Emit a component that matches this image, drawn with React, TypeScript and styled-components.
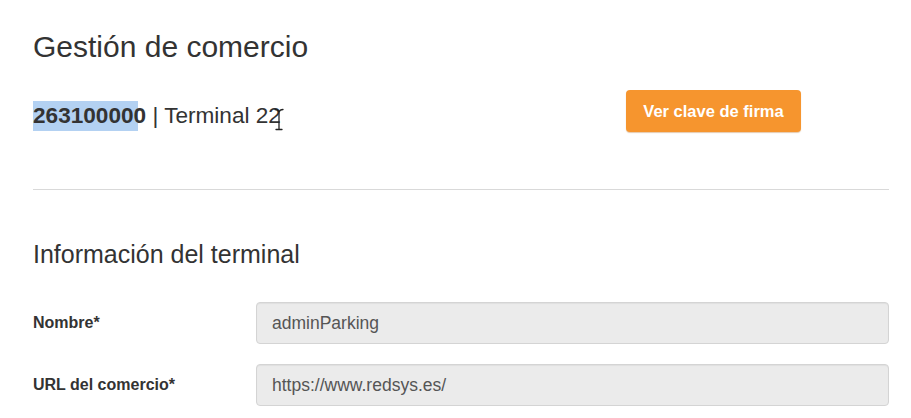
import React from "react";
import styled, { createGlobalStyle } from "styled-components";

const Global = createGlobalStyle`
  html, body { margin: 0; padding: 0; background: #ffffff; }
  body { font-family: "Liberation Sans", Arial, sans-serif; color: #333333; }
`;

const Page = styled.div`
  padding: 29px 22px 0 33px;
  width: 911px;
  box-sizing: border-box;
`;

const Title = styled.h1`
  margin: 0;
  font-size: 30px;
  line-height: 36px;
  font-weight: 400;
  color: #333;
`;

const HeaderRow = styled.div`
  margin-top: 25px;
  display: grid;
  grid-template-columns: 593px auto;
  align-items: start;
`;

const MerchantLine = styled.div`
  margin-top: 13px;
  font-size: 22.6px;
  line-height: 26px;
  color: #333;
  white-space: nowrap;
`;

const Code = styled.strong`
  font-weight: 700;
`;

const Selected = styled.span`
  background: #b3d1f2;
  padding: 2px 4px 3px 0;
  margin-right: -4px;
`;

const CursorWrap = styled.span`
  position: relative;
`;

const Cursor = styled.svg`
  position: absolute;
  left: 5px;
  top: 5px;
`;

const SignButton = styled.button`
  height: 42px;
  width: 175px;
  border: none;
  border-radius: 4px;
  background: #f6952e;
  box-shadow: 0 1px 1px rgba(180, 100, 20, 0.35);
  color: #ffffff;
  font-family: "Liberation Sans", Arial, sans-serif;
  font-weight: 700;
  font-size: 16.5px;
  cursor: pointer;
`;

const Divider = styled.hr`
  margin: 57px 0 0 0;
  border: none;
  height: 1px;
  background: #d9d9d9;
`;

const SectionTitle = styled.h2`
  margin: 49px 0 0 0;
  font-size: 25px;
  line-height: 30px;
  font-weight: 400;
  color: #333;
`;

const Form = styled.div`
  margin-top: 33px;
  display: flex;
  flex-direction: column;
  gap: 20px;
`;

const FieldRow = styled.div`
  display: grid;
  grid-template-columns: 223px 1fr;
  align-items: center;
`;

const Label = styled.label`
  font-size: 16px;
  font-weight: 700;
  color: #333;
`;

const Input = styled.input`
  height: 42px;
  box-sizing: border-box;
  width: 100%;
  border: 1px solid #d4d4d4;
  border-radius: 4px;
  background: #ebebeb;
  box-shadow: inset 0 1px 1px rgba(0, 0, 0, 0.05);
  padding: 0 15px;
  font-family: "Liberation Sans", Arial, sans-serif;
  font-size: 17.5px;
  color: #555555;
  outline: none;
`;

export default function App() {
  return (
    <>
      <Global />
      <Page>
        <Title>Gestión de comercio</Title>
        <HeaderRow>
          <MerchantLine>
            <Code>
              <Selected>26310000</Selected>0
            </Code>{" "}
            | Terminal 2
            <CursorWrap>
              2
              <Cursor width="12" height="24" viewBox="0 0 12 24">
                <path
                  d="M2 1.5 C4 1.5 5.5 2.5 6 4 C6.5 2.5 8 1.5 10 1.5 M6 4 V21 M3 21.5 H9"
                  fill="none"
                  stroke="#222"
                  strokeWidth="1.3"
                  strokeLinecap="round"
                />
              </Cursor>
            </CursorWrap>
          </MerchantLine>
          <SignButton>Ver clave de firma</SignButton>
        </HeaderRow>
        <Divider />
        <SectionTitle>Información del terminal</SectionTitle>
        <Form>
          <FieldRow>
            <Label>Nombre*</Label>
            <Input readOnly value="adminParking" />
          </FieldRow>
          <FieldRow>
            <Label>URL del comercio*</Label>
            <Input readOnly value="https://www.redsys.es/" />
          </FieldRow>
        </Form>
      </Page>
    </>
  );
}
